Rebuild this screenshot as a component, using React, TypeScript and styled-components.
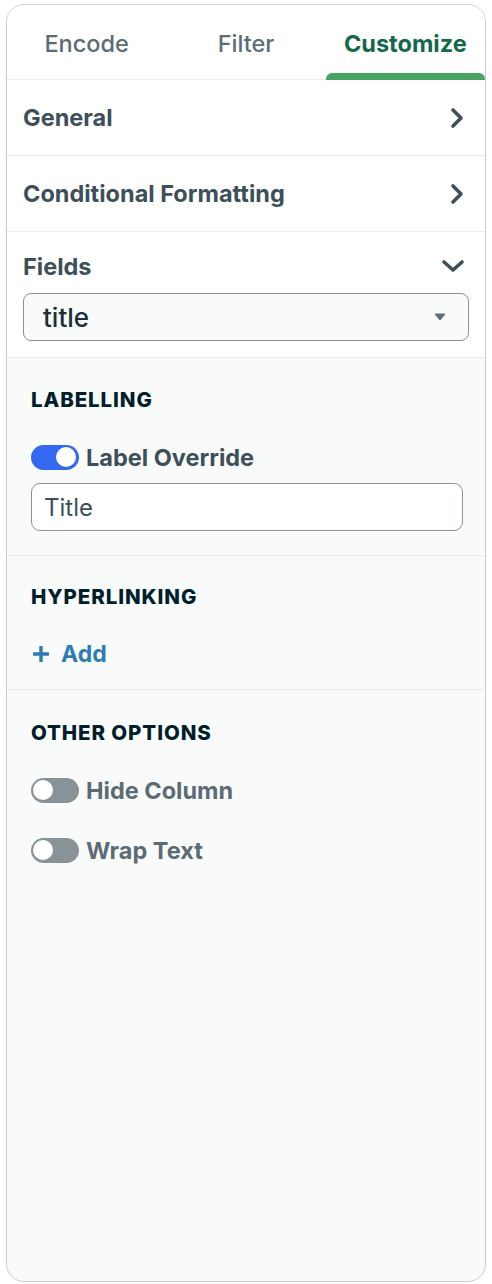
import React, { useState } from 'react';
import styled, { createGlobalStyle } from 'styled-components';

const GlobalStyle = createGlobalStyle`
    body {
        margin: 0;
        background: #ffffff;
        font-family: Inter, 'Noto Sans', sans-serif;
    }
`;

const Panel = styled.div`
    box-sizing: border-box;
    margin: 4px 6px 2px 6px;
    height: 1278px;
    border: 1.5px solid #c9cecd;
    border-radius: 18px;
    overflow: hidden;
    display: flex;
    flex-direction: column;
    background: #f9fbfa;
`;

const TopArea = styled.div`
    background: #ffffff;
`;

const TabBar = styled.div`
    display: grid;
    grid-template-columns: repeat(3, 1fr);
    height: 74px;
    border-bottom: 1px solid #e8edeb;
`;

const Tab = styled.button<{ active?: boolean }>`
    position: relative;
    border: none;
    background: none;
    padding: 3px 0 0;
    font-family: inherit;
    font-size: 23.5px;
    font-weight: ${(p) => (p.active ? 700 : 500)};
    color: ${(p) => (p.active ? '#15684a' : '#5c6c75')};
    cursor: pointer;
    &::after {
        content: '';
        display: ${(p) => (p.active ? 'block' : 'none')};
        position: absolute;
        left: 0;
        right: 0;
        bottom: -1px;
        height: 7px;
        border-radius: 6px 6px 0 0;
        background: #47a463;
    }
`;

const AccordionRow = styled.div<{ open?: boolean }>`
    display: flex;
    align-items: center;
    justify-content: space-between;
    box-sizing: border-box;
    height: ${(p) => (p.open ? '59px' : '75px')};
    padding: ${(p) => (p.open ? '9px 20px 0 16px' : '0 20px 0 16px')};
    font-size: 23.5px;
    font-weight: 700;
    color: #3d4f58;
`;

const AccordionItem = styled.div`
    border-bottom: 1px solid #e8edeb;
`;

const FieldBody = styled.div`
    padding: 2px 16px 16px 16px;
`;

const Select = styled.div`
    box-sizing: border-box;
    display: flex;
    align-items: center;
    justify-content: space-between;
    height: 48px;
    padding: 0 22px 0 19px;
    border: 1.5px solid #889397;
    border-radius: 8px;
    background: #f9fbfa;
    font-size: 26px;
    font-weight: 500;
    color: #1c2d38;
`;

const Section = styled.div<{ top: number; bottom: number }>`
    padding: ${(p) => p.top}px 24px ${(p) => p.bottom}px 24px;
    border-bottom: 1px solid #e8edeb;
    &:last-child {
        border-bottom: none;
    }
`;

const SectionTitle = styled.div`
    height: 24px;
    line-height: 24px;
    font-size: 20.5px;
    font-weight: 800;
    letter-spacing: 0.9px;
    color: #001e2b;
    text-transform: uppercase;
`;

const OptionRow = styled.div<{ gap: number }>`
    display: flex;
    align-items: center;
    gap: 7px;
    height: 28px;
    margin-top: ${(p) => p.gap}px;
    font-size: 23.5px;
    font-weight: 700;
    color: #5c6c75;
`;

const OptionLabel = styled.span<{ on?: boolean }>`
    color: ${(p) => (p.on ? '#3d4f58' : '#5c6c75')};
`;

const Track = styled.button<{ on?: boolean }>`
    position: relative;
    box-sizing: border-box;
    width: 48px;
    height: 25px;
    padding: 0;
    border: none;
    border-radius: 13px;
    background: ${(p) => (p.on ? '#3468f0' : '#889397')};
    cursor: pointer;
    &::after {
        content: '';
        position: absolute;
        top: 2.5px;
        left: ${(p) => (p.on ? '25px' : '2px')};
        width: 20px;
        height: 20px;
        border-radius: 50%;
        background: #ffffff;
    }
`;

const TextInput = styled.input`
    box-sizing: border-box;
    display: block;
    width: 432px;
    height: 48px;
    margin-top: 12px;
    padding: 0 12px;
    border: 1.5px solid #889397;
    border-radius: 9px;
    background: #ffffff;
    font-family: inherit;
    font-size: 24px;
    color: #3d4f58;
    outline: none;
`;

const AddLink = styled.button`
    display: flex;
    align-items: center;
    gap: 12px;
    height: 24px;
    margin-top: 33px;
    padding: 0 0 0 2px;
    border: none;
    background: none;
    font-family: inherit;
    font-size: 23px;
    font-weight: 700;
    color: #2e7bb3;
    cursor: pointer;
`;

const ChevronRight = () => (
    <svg width='16' height='22' viewBox='0 0 16 22'>
        <path d='M4 3 L12 11 L4 19' fill='none' stroke='#3d4f58' strokeWidth='3.6' strokeLinecap='round' strokeLinejoin='round' />
    </svg>
);

const ChevronDown = () => (
    <svg width='24' height='16' viewBox='0 0 24 16'>
        <path d='M3 4 L12 12 L21 4' fill='none' stroke='#3d4f58' strokeWidth='3.6' strokeLinecap='round' strokeLinejoin='round' />
    </svg>
);

const Caret = () => (
    <svg width='12' height='8' viewBox='0 0 12 8'>
        <path d='M1 1 L11 1 L6 7 Z' fill='#5c6c75' stroke='#5c6c75' strokeWidth='1' strokeLinejoin='round' />
    </svg>
);

const Plus = () => (
    <svg width='16' height='16' viewBox='0 0 16 16'>
        <path d='M8 1 V15 M1 8 H15' stroke='#2e7bb3' strokeWidth='3.4' strokeLinecap='round' />
    </svg>
);

const Toggle = ({ on, onClick }: { on: boolean; onClick: () => void }) => (
    <Track on={on} onClick={onClick} aria-pressed={on} />
);

export default function App() {
    const [labelOverride, setLabelOverride] = useState(true);
    const [hideColumn, setHideColumn] = useState(false);
    const [wrapText, setWrapText] = useState(false);
    const [label, setLabel] = useState('Title');

    return (
        <>
            <GlobalStyle />
            <Panel>
                <TopArea>
                    <TabBar>
                        <Tab>Encode</Tab>
                        <Tab>Filter</Tab>
                        <Tab active>Customize</Tab>
                    </TabBar>
                    <AccordionItem>
                        <AccordionRow>
                            General
                            <ChevronRight />
                        </AccordionRow>
                    </AccordionItem>
                    <AccordionItem>
                        <AccordionRow>
                            Conditional Formatting
                            <ChevronRight />
                        </AccordionRow>
                    </AccordionItem>
                    <AccordionItem>
                        <AccordionRow open>
                            Fields
                            <ChevronDown />
                        </AccordionRow>
                        <FieldBody>
                            <Select>
                                title
                                <Caret />
                            </Select>
                        </FieldBody>
                    </AccordionItem>
                </TopArea>

                <Section top={30} bottom={24}>
                    <SectionTitle>Labelling</SectionTitle>
                    <OptionRow gap={31}>
                        <Toggle on={labelOverride} onClick={() => setLabelOverride(!labelOverride)} />
                        <OptionLabel on={labelOverride}>Label Override</OptionLabel>
                    </OptionRow>
                    <TextInput value={label} onChange={(e) => setLabel(e.target.value)} />
                </Section>

                <Section top={29} bottom={23}>
                    <SectionTitle>Hyperlinking</SectionTitle>
                    <AddLink>
                        <Plus />
                        Add
                    </AddLink>
                </Section>

                <Section top={31} bottom={24}>
                    <SectionTitle>Other Options</SectionTitle>
                    <OptionRow gap={31}>
                        <Toggle on={hideColumn} onClick={() => setHideColumn(!hideColumn)} />
                        <OptionLabel>Hide Column</OptionLabel>
                    </OptionRow>
                    <OptionRow gap={32}>
                        <Toggle on={wrapText} onClick={() => setWrapText(!wrapText)} />
                        <OptionLabel>Wrap Text</OptionLabel>
                    </OptionRow>
                </Section>
            </Panel>
        </>
    );
}
